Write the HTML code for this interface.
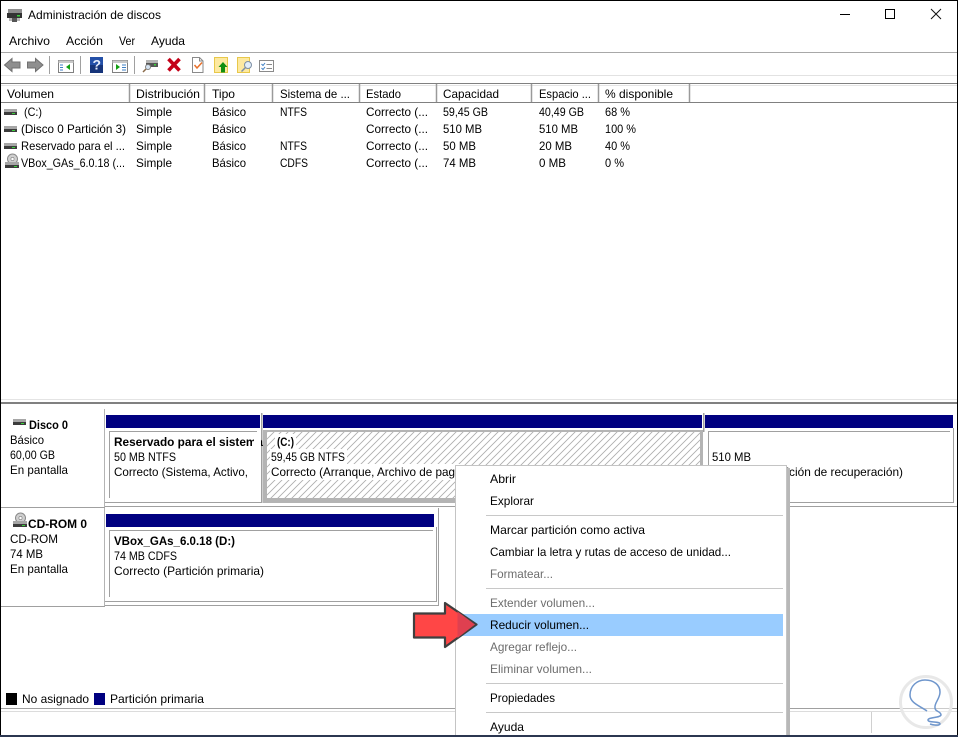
<!DOCTYPE html>
<html lang="es">
<head>
<meta charset="utf-8">
<title>Administración de discos</title>
<style>
html,body{margin:0;padding:0;background:#fff;width:958px;height:737px;overflow:hidden}
svg{display:block;position:absolute;left:0;top:0}
text{font-family:"Liberation Sans",Arial,sans-serif;font-size:12px;fill:#000}
.b{font-weight:bold}
.g{fill:#6d6d6d}
</style>
</head>
<body>
<svg width="958" height="737" viewBox="0 0 958 737" xmlns="http://www.w3.org/2000/svg">
<defs>
<pattern id="h" width="7" height="7" patternUnits="userSpaceOnUse" patternTransform="translate(267 432)">
<path d="M-2 2L2 -2M-2 9L9 -2M5 9L9 5" stroke="#adadad" stroke-width=".85" fill="none"/>
</pattern>
<g id="drv">
<rect x="0" y="0" width="13" height="3" fill="#a6a6a6"/>
<rect x="0" y="3" width="13" height="3" fill="#3c3c3c"/>
<rect x="8" y="4" width="3" height="1" fill="#3ad13a"/>
</g>
<g id="cd">
<circle cx="8.5" cy="5" r="5" fill="#cfcfcf" stroke="#8a8a8a"/>
<circle cx="8.5" cy="5" r="1.6" fill="#fff" stroke="#8a8a8a" stroke-width=".7"/>
<rect x="1" y="8" width="14" height="3" fill="#a6a6a6"/>
<rect x="1" y="11" width="14" height="3" fill="#3c3c3c"/>
<rect x="10" y="12" width="3" height="1" fill="#3ad13a"/>
</g>
</defs>

<rect width="958" height="737" fill="#fff"/>

<!-- title bar -->
<rect x="8" y="9" width="14" height="5" fill="#8d8d8d"/>
<rect x="7" y="13" width="15" height="5" fill="#333"/>
<rect x="17" y="15" width="3" height="1.5" fill="#3ad13a"/>
<rect x="9" y="18" width="11" height="3" fill="#b5b5b5"/>
<rect x="12" y="18" width="5" height="4" fill="#555"/>
<text lengthAdjust="spacingAndGlyphs" x="28" y="19" textLength="133">Administración de discos</text>
<path d="M840 14.5H850" stroke="#000" fill="none"/>
<rect x="885.5" y="9.5" width="9" height="9" fill="none" stroke="#000"/>
<path d="M931 9L941 19M941 9L931 19" stroke="#111" fill="none"/>

<!-- menu bar -->
<text lengthAdjust="spacingAndGlyphs" x="9" y="45" textLength="41">Archivo</text>
<text lengthAdjust="spacingAndGlyphs" x="66" y="45" textLength="37">Acción</text>
<text lengthAdjust="spacingAndGlyphs" x="119" y="45" textLength="16">Ver</text>
<text lengthAdjust="spacingAndGlyphs" x="151" y="45" textLength="34">Ayuda</text>
<rect x="1" y="52" width="956" height="1" fill="#a8a8a8"/>

<!-- toolbar -->
<path d="M4.5 65L12 58.5V62H20V68H12V71.5Z" fill="#8f8f8f" stroke="#707070"/>
<path d="M43 65L35.5 58.5V62H27.5V68H35.5V71.5Z" fill="#8f8f8f" stroke="#707070"/>
<rect x="49" y="56" width="1" height="18" fill="#a0a0a0"/>
<rect x="80" y="56" width="1" height="18" fill="#a0a0a0"/>
<rect x="134" y="56" width="1" height="18" fill="#a0a0a0"/>
<rect x="58.5" y="60.5" width="15" height="12" fill="#fff" stroke="#808080"/>
<rect x="58.5" y="60.5" width="15" height="2.5" fill="#c8c8c8"/>
<path d="M60 65H63M60 67.5H63M60 70H63" stroke="#3d7fc4"/>
<path d="M70 64V70L66 67Z" fill="#12a012"/>
<rect x="90" y="57" width="13" height="16" fill="#2450a8"/>
<rect x="90" y="65" width="13" height="8" fill="#16347a"/>
<text x="92.5" y="69.5" style="font-size:14px;font-weight:bold;fill:#e8eefc">?</text>
<rect x="112.5" y="60.5" width="15" height="12" fill="#fff" stroke="#808080"/>
<rect x="112.5" y="60.5" width="15" height="2.5" fill="#c8c8c8"/>
<path d="M116 64V70L120 67Z" fill="#12a012"/>
<path d="M122 65H126M122 67.5H126M122 70H126" stroke="#3d7fc4"/>
<rect x="146" y="60" width="12" height="3" fill="#b5b5b5"/>
<rect x="146" y="63" width="12" height="4" fill="#555"/>
<rect x="154" y="64" width="2" height="1.5" fill="#3ad13a"/>
<circle cx="148" cy="67" r="2.5" fill="#d5e4f3" stroke="#808080"/>
<path d="M146 69L143 72" stroke="#8a6a4a" stroke-width="1.5"/>
<path d="M168.5 59L179.5 70.5M179.5 59L168.5 70.5" stroke="#c40018" stroke-width="3.6"/>
<path d="M192.5 57.5H199.5L203 61V72.5H192.5Z" fill="#fff" stroke="#8a8a8a"/>
<path d="M199.5 57.5V61H203" fill="none" stroke="#8a8a8a"/>
<path d="M194.5 65L197 68L202 62.5" fill="none" stroke="#e8702a" stroke-width="1.5"/>
<rect x="214.5" y="57.5" width="13" height="15" fill="#fde9a0" stroke="#e8c84a"/>
<path d="M223 62L227.5 67H225V72.5H221V67H218.5Z" fill="#118f11"/>
<rect x="237.5" y="57.5" width="12" height="15" fill="#fde9a0" stroke="#e8c84a"/>
<circle cx="248" cy="65" r="3.5" fill="#e2eef8" stroke="#7d8fa5"/>
<path d="M245.5 67.5L241.5 71.5" stroke="#7d8fa5" stroke-width="1.5"/>
<rect x="259.5" y="60.5" width="14" height="11" fill="#fff" stroke="#8a8a8a"/>
<path d="M261.5 64L263 65.5L265 63M261.5 68L263 69.5L265 67" stroke="#3d7fc4" fill="none"/>
<path d="M266.5 64.5H272M266.5 68.5H272" stroke="#8a8a8a"/>
<rect x="1" y="75" width="956" height="1" fill="#e2e2e2"/>

<!-- list header -->
<rect x="1" y="83" width="956" height="1" fill="#808080"/>
<rect x="1" y="85" width="956" height="1" fill="#e4e4e4"/>
<rect x="1" y="102" width="956" height="1" fill="#808080"/>
<path d="M129.5 84V102M204.5 84V102M272.5 84V102M359.5 84V102M436.5 84V102M531.5 84V102M598.5 84V102M689.5 84V102" stroke="#9a9a9a" stroke-width="1.5" fill="none"/>
<text lengthAdjust="spacingAndGlyphs" x="7" y="98" textLength="47">Volumen</text>
<text lengthAdjust="spacingAndGlyphs" x="136" y="98" textLength="64">Distribución</text>
<text lengthAdjust="spacingAndGlyphs" x="212" y="98" textLength="23">Tipo</text>
<text lengthAdjust="spacingAndGlyphs" x="280" y="98" textLength="70">Sistema de ...</text>
<text lengthAdjust="spacingAndGlyphs" x="366" y="98" textLength="35">Estado</text>
<text lengthAdjust="spacingAndGlyphs" x="443" y="98" textLength="56">Capacidad</text>
<text lengthAdjust="spacingAndGlyphs" x="539" y="98" textLength="52">Espacio ...</text>
<text lengthAdjust="spacingAndGlyphs" x="605" y="98" textLength="68">% disponible</text>

<!-- list rows -->
<use href="#drv" x="4" y="109"/>
<use href="#drv" x="4" y="126"/>
<use href="#drv" x="4" y="143"/>
<use href="#cd" x="4" y="154"/>

<text lengthAdjust="spacingAndGlyphs" x="24" y="116" textLength="18">(C:)</text>
<text lengthAdjust="spacingAndGlyphs" x="136" y="116" textLength="36">Simple</text>
<text lengthAdjust="spacingAndGlyphs" x="212" y="116" textLength="34">Básico</text>
<text lengthAdjust="spacingAndGlyphs" x="280" y="116" textLength="27">NTFS</text>
<text lengthAdjust="spacingAndGlyphs" x="366" y="116" textLength="62">Correcto (...</text>
<text lengthAdjust="spacingAndGlyphs" x="443" y="116" textLength="45">59,45 GB</text>
<text lengthAdjust="spacingAndGlyphs" x="539" y="116" textLength="45">40,49 GB</text>
<text lengthAdjust="spacingAndGlyphs" x="605" y="116" textLength="25">68 %</text>

<text lengthAdjust="spacingAndGlyphs" x="21" y="133" textLength="105">(Disco 0 Partición 3)</text>
<text lengthAdjust="spacingAndGlyphs" x="136" y="133" textLength="36">Simple</text>
<text lengthAdjust="spacingAndGlyphs" x="212" y="133" textLength="34">Básico</text>
<text lengthAdjust="spacingAndGlyphs" x="366" y="133" textLength="62">Correcto (...</text>
<text lengthAdjust="spacingAndGlyphs" x="443" y="133" textLength="39">510 MB</text>
<text lengthAdjust="spacingAndGlyphs" x="539" y="133" textLength="39">510 MB</text>
<text lengthAdjust="spacingAndGlyphs" x="605" y="133" textLength="31">100 %</text>

<text lengthAdjust="spacingAndGlyphs" x="21" y="150" textLength="104">Reservado para el ...</text>
<text lengthAdjust="spacingAndGlyphs" x="136" y="150" textLength="36">Simple</text>
<text lengthAdjust="spacingAndGlyphs" x="212" y="150" textLength="34">Básico</text>
<text lengthAdjust="spacingAndGlyphs" x="280" y="150" textLength="27">NTFS</text>
<text lengthAdjust="spacingAndGlyphs" x="366" y="150" textLength="62">Correcto (...</text>
<text lengthAdjust="spacingAndGlyphs" x="443" y="150" textLength="33">50 MB</text>
<text lengthAdjust="spacingAndGlyphs" x="539" y="150" textLength="33">20 MB</text>
<text lengthAdjust="spacingAndGlyphs" x="605" y="150" textLength="25">40 %</text>

<text lengthAdjust="spacingAndGlyphs" x="21" y="167" textLength="104">VBox_GAs_6.0.18 (...</text>
<text lengthAdjust="spacingAndGlyphs" x="136" y="167" textLength="36">Simple</text>
<text lengthAdjust="spacingAndGlyphs" x="212" y="167" textLength="34">Básico</text>
<text lengthAdjust="spacingAndGlyphs" x="280" y="167" textLength="28">CDFS</text>
<text lengthAdjust="spacingAndGlyphs" x="366" y="167" textLength="62">Correcto (...</text>
<text lengthAdjust="spacingAndGlyphs" x="443" y="167" textLength="33">74 MB</text>
<text lengthAdjust="spacingAndGlyphs" x="539" y="167" textLength="27">0 MB</text>
<text lengthAdjust="spacingAndGlyphs" x="605" y="167" textLength="19">0 %</text>

<!-- pane splitter -->
<rect x="1" y="399" width="956" height="1" fill="#e4e4e4"/>
<rect x="1" y="402" width="956" height="2" fill="#808080"/>

<!-- disk label column -->
<path d="M104.5 409V507M104.5 508V606" stroke="#b4b4b4" fill="none"/>
<rect x="1" y="507" width="104" height="1" fill="#a0a0a0"/>
<rect x="1" y="606" width="104" height="1" fill="#a0a0a0"/>
<use href="#drv" x="13" y="419"/>
<use href="#cd" x="12" y="513"/>
<text lengthAdjust="spacingAndGlyphs" class="b" x="29" y="429" textLength="39">Disco 0</text>
<text lengthAdjust="spacingAndGlyphs" x="10" y="444" textLength="34">Básico</text>
<text lengthAdjust="spacingAndGlyphs" x="10" y="459" textLength="45">60,00 GB</text>
<text lengthAdjust="spacingAndGlyphs" x="10" y="474" textLength="58">En pantalla</text>
<text lengthAdjust="spacingAndGlyphs" class="b" x="28" y="528" textLength="59">CD-ROM 0</text>
<text lengthAdjust="spacingAndGlyphs" x="10" y="543" textLength="48">CD-ROM</text>
<text lengthAdjust="spacingAndGlyphs" x="10" y="558" textLength="33">74 MB</text>
<text lengthAdjust="spacingAndGlyphs" x="10" y="573" textLength="58">En pantalla</text>

<!-- disk 0 -->
<rect x="106" y="415" width="154" height="13" fill="#000080"/>
<rect x="263" y="415" width="439" height="13" fill="#000080"/>
<rect x="705" y="415" width="248" height="13" fill="#000080"/>
<rect x="261" y="413" width="1.5" height="90" fill="#a0a0a0"/>
<rect x="703" y="413" width="1.5" height="19" fill="#a0a0a0"/>

<path d="M109.5 498V431.5H257M105 502.5H261" stroke="#a0a0a0" fill="none"/>
<text lengthAdjust="spacingAndGlyphs" class="b" x="114" y="446" textLength="149">Reservado para el sistema</text>
<text lengthAdjust="spacingAndGlyphs" x="114" y="461" textLength="62">50 MB NTFS</text>
<text lengthAdjust="spacingAndGlyphs" x="114" y="476" textLength="134">Correcto (Sistema, Activo,</text>
<rect x="254" y="432" width="7" height="50" fill="#fff"/>

<rect x="263" y="430" width="440" height="73" fill="#b4b4b4"/>
<rect x="267" y="432" width="433" height="66" fill="#fff"/>
<rect x="267" y="432" width="433" height="66" fill="url(#h)"/>
<rect x="275" y="434" width="21" height="15" fill="#fff"/>
<rect x="270" y="449" width="77" height="15" fill="#fff"/>
<rect x="270" y="464" width="190" height="16" fill="#fff"/>
<text lengthAdjust="spacingAndGlyphs" class="b" x="277" y="446" textLength="17">(C:)</text>
<text lengthAdjust="spacingAndGlyphs" x="271" y="461" textLength="74">59,45 GB NTFS</text>
<text lengthAdjust="spacingAndGlyphs" x="271" y="476" textLength="184">Correcto (Arranque, Archivo de pag</text>

<path d="M708.5 498V431.5H950M953.5 428V502.5H704" stroke="#a0a0a0" fill="none"/>
<text lengthAdjust="spacingAndGlyphs" x="712" y="461" textLength="39">510 MB</text>
<text lengthAdjust="spacingAndGlyphs" x="712" y="476" textLength="191">Correcto (Partición de recuperación)</text>

<rect x="105" y="506" width="852" height="1" fill="#a0a0a0"/>

<!-- cd-rom -->
<rect x="106" y="514" width="328" height="13" fill="#000080"/>
<path d="M109.5 597V530.5H433M436.5 527V601.5H105" stroke="#a0a0a0" fill="none"/>
<path d="M438.5 508V605.5H105" stroke="#a0a0a0" fill="none"/>
<text lengthAdjust="spacingAndGlyphs" class="b" x="114" y="545" textLength="121">VBox_GAs_6.0.18  (D:)</text>
<text lengthAdjust="spacingAndGlyphs" x="114" y="560" textLength="63">74 MB CDFS</text>
<text lengthAdjust="spacingAndGlyphs" x="114" y="575" textLength="150">Correcto (Partición primaria)</text>

<!-- legend -->
<rect x="6" y="693" width="11" height="12" fill="#000"/>
<text lengthAdjust="spacingAndGlyphs" x="22" y="703" textLength="67">No asignado</text>
<rect x="94" y="693" width="11" height="12" fill="#000080"/>
<text lengthAdjust="spacingAndGlyphs" x="110" y="703" textLength="94">Partición primaria</text>

<!-- status bar -->
<rect x="1" y="708" width="956" height="1" fill="#a0a0a0"/>
<rect x="1" y="711" width="956" height="1" fill="#dcdcdc"/>
<rect x="871" y="712" width="1" height="21" fill="#d0d0d0"/>

<!-- watermark -->
<circle cx="926" cy="702" r="25.5" fill="#fff" fill-opacity=".45" stroke="#e8e8e8" stroke-width="3"/>
<path d="M927 711C920 706 910 703 910 695C910 686 917 680 925 680C934 680 940 685 940 692C940 699 934 703 935 708C935 712 941 711 941 715C940 718 928 717 928 720C928 723 940 721 940 724C939 726 933 725 930 724" fill="none" stroke="#6f96cc" stroke-width="1.5"/>

<!-- context menu -->
<rect x="787" y="468" width="3" height="267" fill="#b8b8b8"/>
<rect x="455.5" y="465.5" width="331" height="275" fill="#fff" stroke="#c4c4c4"/>
<text lengthAdjust="spacingAndGlyphs" x="490" y="483" textLength="26">Abrir</text>
<text lengthAdjust="spacingAndGlyphs" x="490" y="505" textLength="44">Explorar</text>
<rect x="486" y="515" width="297" height="1" fill="#c8c8c8"/>
<text lengthAdjust="spacingAndGlyphs" x="490" y="534" textLength="155">Marcar partición como activa</text>
<text lengthAdjust="spacingAndGlyphs" x="490" y="556" textLength="241">Cambiar la letra y rutas de acceso de unidad...</text>
<text lengthAdjust="spacingAndGlyphs" class="g" x="490" y="578" textLength="63">Formatear...</text>
<rect x="486" y="588" width="297" height="1" fill="#c8c8c8"/>
<text lengthAdjust="spacingAndGlyphs" class="g" x="490" y="607" textLength="105">Extender volumen...</text>
<rect x="456" y="614" width="327" height="22" fill="#99ccff"/>
<text lengthAdjust="spacingAndGlyphs" x="490" y="629" textLength="99">Reducir volumen...</text>
<text lengthAdjust="spacingAndGlyphs" class="g" x="490" y="651" textLength="87">Agregar reflejo...</text>
<text lengthAdjust="spacingAndGlyphs" class="g" x="490" y="673" textLength="102">Eliminar volumen...</text>
<rect x="486" y="683" width="297" height="1" fill="#c8c8c8"/>
<text lengthAdjust="spacingAndGlyphs" x="490" y="702" textLength="65">Propiedades</text>
<rect x="486" y="712" width="297" height="1" fill="#c8c8c8"/>
<text lengthAdjust="spacingAndGlyphs" x="490" y="731" textLength="34">Ayuda</text>

<!-- red arrow -->
<path d="M414 613.5H445V603L476.5 624.5L445 647V637.5H414Z" fill="#ff4646" stroke="#3f3f3f" stroke-width="2.2" stroke-linejoin="round"/>
<path d="M457.5 611.5L475 624.5L457.5 638Z" fill="#df4050"/>

<!-- window frame -->
<rect x="0" y="0" width="958" height="1" fill="#000"/>
<rect x="0" y="0" width="1" height="737" fill="#000"/>
<rect x="957" y="0" width="1" height="737" fill="#000"/>
<rect x="0" y="735" width="958" height="2" fill="#2b3650"/>
</svg>
</body>
</html>
